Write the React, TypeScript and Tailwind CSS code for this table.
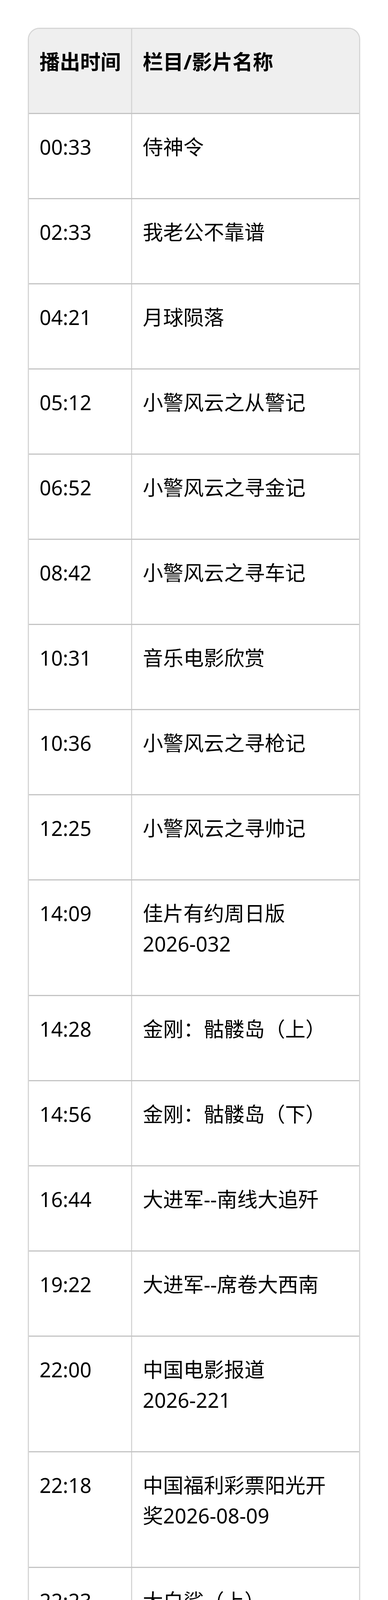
import React from "react";

const rows: [string, string[]][] = [
  ["00:33", ["侍神令"]],
  ["02:33", ["我老公不靠谱"]],
  ["04:21", ["月球陨落"]],
  ["05:12", ["小警风云之从警记"]],
  ["06:52", ["小警风云之寻金记"]],
  ["08:42", ["小警风云之寻车记"]],
  ["10:31", ["音乐电影欣赏"]],
  ["10:36", ["小警风云之寻枪记"]],
  ["12:25", ["小警风云之寻帅记"]],
  ["14:09", ["佳片有约周日版", "2026-032"]],
  ["14:28", ["金刚：骷髅岛（上）"]],
  ["14:56", ["金刚：骷髅岛（下）"]],
  ["16:44", ["大进军--南线大追歼"]],
  ["19:22", ["大进军--席卷大西南"]],
  ["22:00", ["中国电影报道", "2026-221"]],
  ["22:18", ["中国福利彩票阳光开", "奖2026-08-09"]],
  ["22:23", ["大白鲨（上）"]],
  ["23:00", ["中国体育彩票阳光开", "奖2026-08-09"]],
  ["23:01", ["大白鲨（下）"]],
];

export default function App() {
  return (
    <div
      className="bg-white px-[71px] pt-[71px] pb-[60px] text-black"
      style={{ fontFamily: '"Noto Sans", "Noto Sans CJK SC", sans-serif' }}
    >
      <div className="border-[3px] border-[#d6d6d6] rounded-[30px] overflow-hidden text-[52px] leading-[78px]">
        <div className="flex bg-[#efefef] font-bold">
          <div className="w-[264px] shrink-0 border-r-[3px] border-[#d6d6d6] pl-[27px] pr-[20px] pt-[45px] pb-[92px]">
            播出时间
          </div>
          <div className="flex-1 pl-[27px] pr-[40px] pt-[45px] pb-[92px]">栏目/影片名称</div>
        </div>
        {rows.map(([t, lines]) => (
          <div key={t} className="flex border-t-[3px] border-[#c4c4c4]">
            <div className="w-[264px] shrink-0 border-r-[3px] border-[#d6d6d6] pl-[27px] pr-[20px] pt-[45px] pb-[92px]">
              {t}
            </div>
            <div className="flex-1 min-w-0 flex flex-col pl-[27px] pr-[40px] pt-[45px] pb-[92px]">
              {lines.map((l, i) => (
                <div key={i} className="whitespace-nowrap">
                  {l}
                </div>
              ))}
            </div>
          </div>
        ))}
      </div>
    </div>
  );
}
